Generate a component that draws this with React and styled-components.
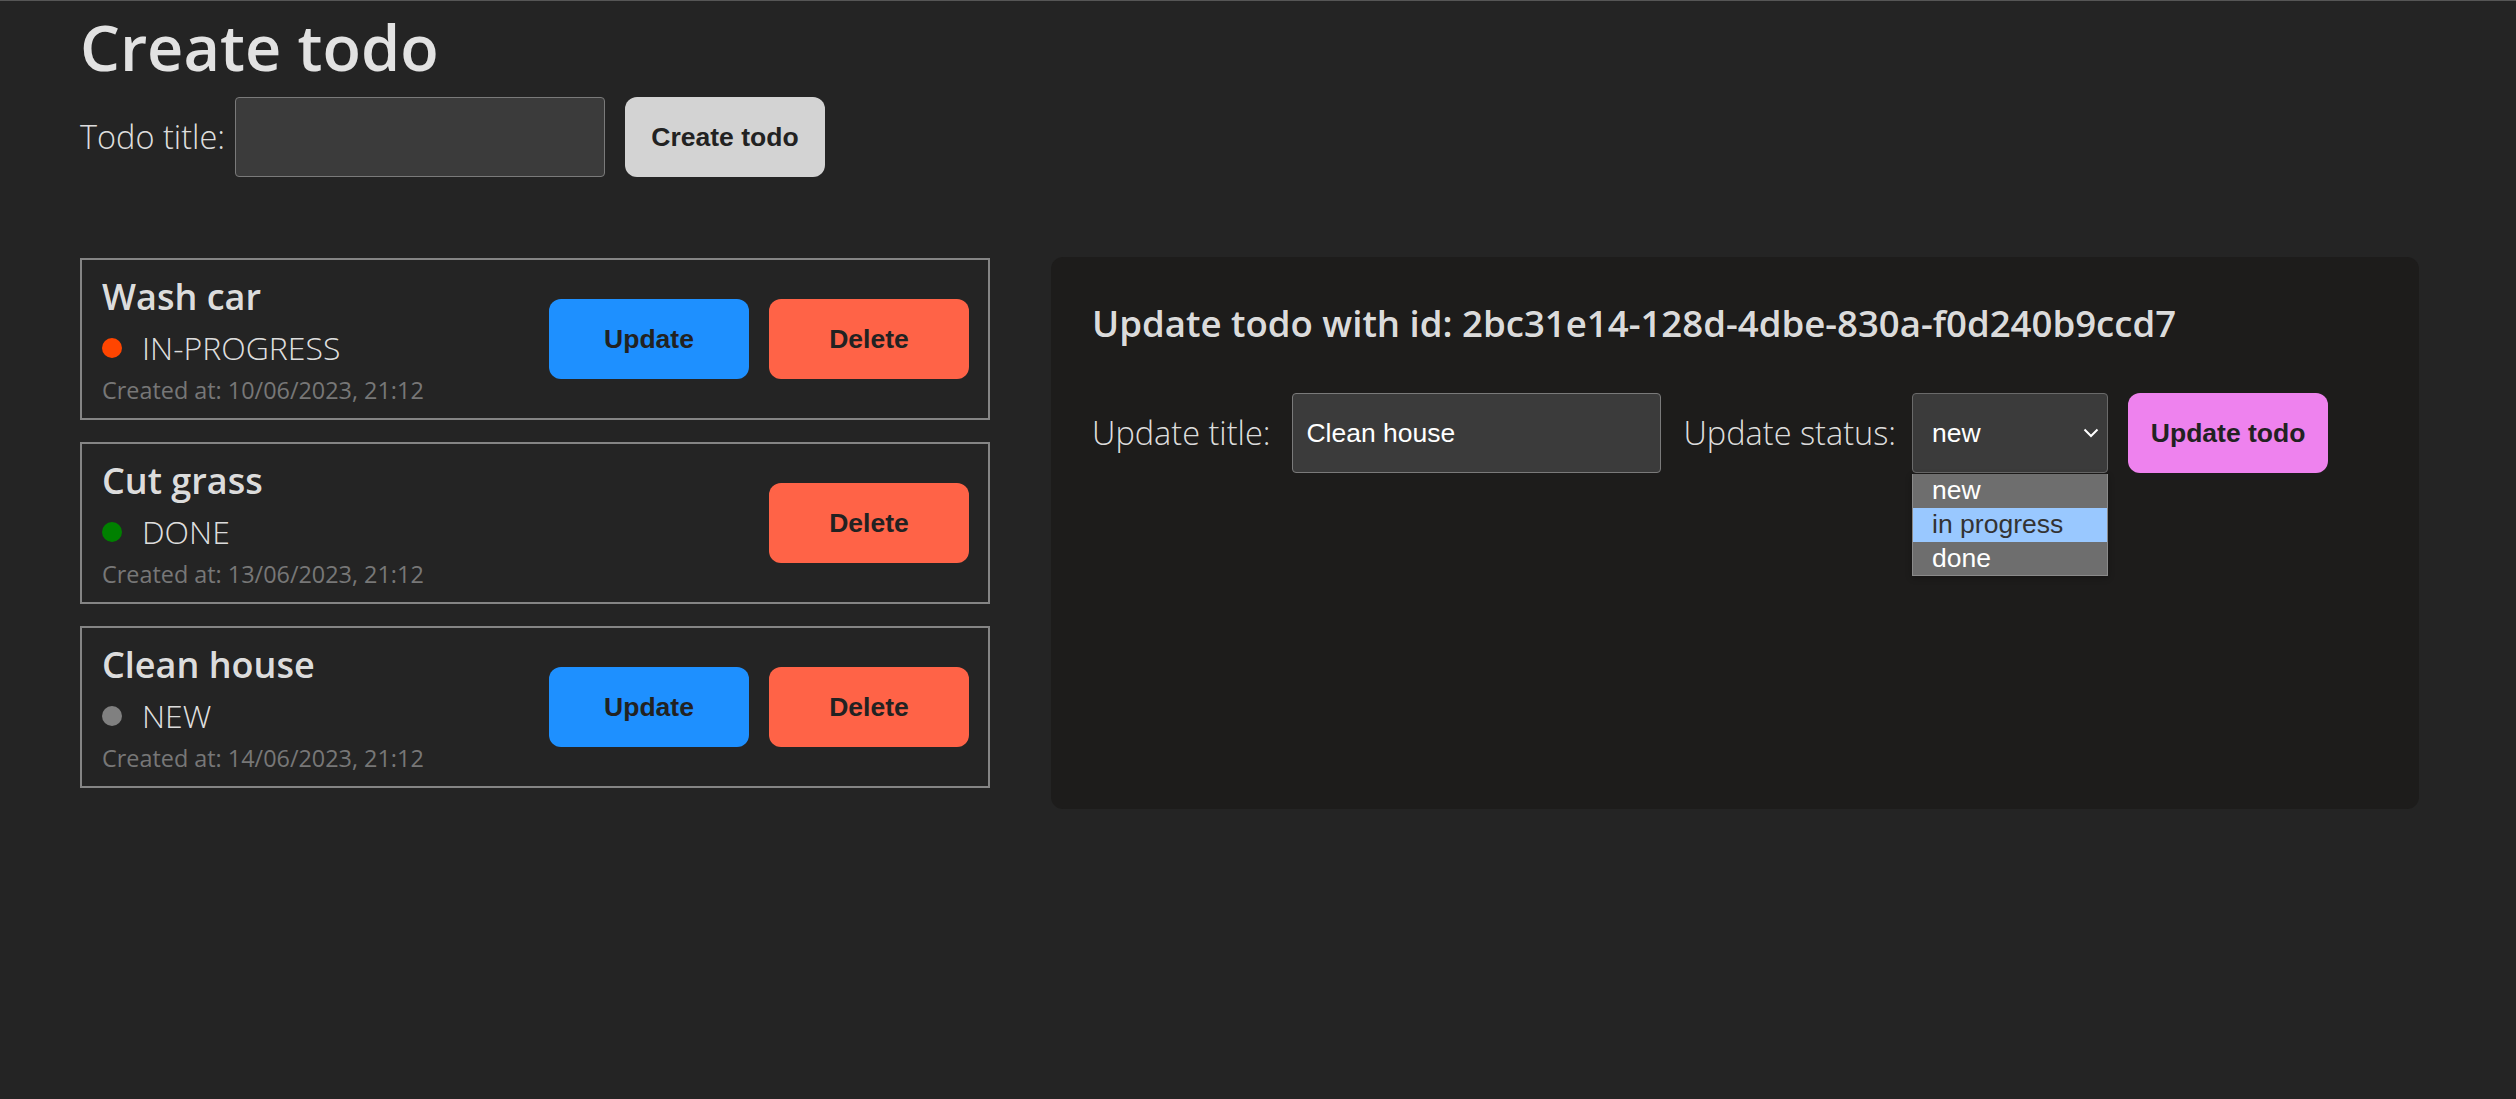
import React from "react";
import styled, { createGlobalStyle } from "styled-components";

const GlobalStyle = createGlobalStyle`
  html, body {
    margin: 0;
    padding: 0;
    background: #242424;
  }
  body {
    border-top: 1px solid #565656;
    min-height: 100vh;
    box-sizing: border-box;
    font-family: "Open Sans", "Noto Sans", sans-serif;
    color: rgba(255, 255, 255, 0.87);
  }
`;

const Page = styled.div`
  padding: 11px 80px 0 80px;
`;

const PageTitle = styled.h1`
  margin: 0;
  font-weight: 600;
  font-size: 63px;
  line-height: 70.4px;
  color: rgba(255, 255, 255, 0.87);
`;

const CreateRow = styled.div`
  display: flex;
  align-items: center;
  height: 80px;
  margin-top: 15px;
`;

const FieldLabel = styled.label`
  font-weight: 300;
  font-size: 32.5px;
  line-height: 40px;
  white-space: nowrap;
  margin-right: ${(p) => p.$gap}px;
`;

const TextInput = styled.input`
  box-sizing: border-box;
  width: ${(p) => p.$width}px;
  height: 80px;
  background: #3b3b3b;
  border: 1px solid #7a7a7a;
  border-radius: 4px;
  color: #fff;
  font-family: "Liberation Sans", Arial, sans-serif;
  font-size: 26.5px;
  padding: 0 13px;
  outline: none;
  margin-right: ${(p) => p.$gap}px;
`;

const Button = styled.button`
  box-sizing: border-box;
  width: 200px;
  height: 80px;
  border: none;
  border-radius: 12px;
  background: ${(p) => p.$bg};
  color: #222;
  font-family: "Liberation Sans", Arial, sans-serif;
  font-weight: 700;
  font-size: 26.5px;
  cursor: pointer;
  padding: 0;
`;

const Main = styled.div`
  display: flex;
  align-items: flex-start;
  gap: 61px;
  margin-top: 80px;
`;

const TodoList = styled.div`
  width: 910px;
  display: flex;
  flex-direction: column;
  gap: 22px;
  margin-top: 1px;
`;

const Card = styled.div`
  box-sizing: border-box;
  height: 162px;
  border: 2px solid #858585;
  display: flex;
  align-items: center;
  justify-content: space-between;
  padding: 0 19px 0 20px;
`;

const Info = styled.div`
  display: flex;
  flex-direction: column;
`;

const CardTitle = styled.div`
  font-weight: 600;
  font-size: 36px;
  line-height: 48px;
  margin-bottom: 7px;
  color: rgba(255, 255, 255, 0.87);
`;

const StatusRow = styled.div`
  display: flex;
  align-items: center;
  gap: 20px;
  height: 40px;
  margin-bottom: 6px;
  font-weight: 300;
  font-size: 32px;
`;

const Dot = styled.span`
  width: 20px;
  height: 20px;
  border-radius: 50%;
  background: ${(p) => p.$color};
  flex: none;
`;

const Created = styled.div`
  font-weight: 400;
  font-size: 23.4px;
  line-height: 32px;
  color: #777;
`;

const Actions = styled.div`
  display: flex;
  gap: 20px;
`;

const Panel = styled.section`
  box-sizing: border-box;
  width: 1368px;
  height: 552px;
  background: #1d1c1b;
  border-radius: 12px;
  padding: 42px 41px;
`;

const PanelHeading = styled.h2`
  margin: 0;
  font-weight: 600;
  font-size: 36.6px;
  line-height: 48px;
  color: rgba(255, 255, 255, 0.87);
`;

const UpdateRow = styled.div`
  display: flex;
  align-items: center;
  height: 80px;
  margin-top: 46px;
`;

const SelectWrap = styled.div`
  position: relative;
  width: 196px;
  height: 80px;
  margin-right: 20px;
`;

const Select = styled.select`
  appearance: none;
  box-sizing: border-box;
  width: 100%;
  height: 100%;
  background: #3b3b3b;
  border: 1px solid #6a6a6a;
  border-radius: 4px;
  color: #fff;
  font-family: "Liberation Sans", Arial, sans-serif;
  font-size: 26.5px;
  padding: 0 19px;
  outline: none;
`;

const Chevron = styled.svg`
  position: absolute;
  right: 9px;
  top: 35px;
  pointer-events: none;
`;

const OptionList = styled.ul`
  position: absolute;
  top: 100%;
  left: 0;
  right: 0;
  margin: 1px 0 0;
  padding: 0;
  list-style: none;
  background: #6e6e6e;
  border: 1px solid #8a8a8a;
  border-top: none;
  box-shadow: 0 2px 6px rgba(0, 0, 0, 0.3);
  font-family: "Liberation Sans", Arial, sans-serif;
  font-size: 26.5px;
`;

const OptionItem = styled.li`
  height: 33.6px;
  line-height: 33.6px;
  padding-left: 19px;
  color: ${(p) => (p.$active ? "#333" : "#fff")};
  background: ${(p) => (p.$active ? "#99c8ff" : "transparent")};
`;

const todos = [
  { title: "Wash car", status: "IN-PROGRESS", color: "#ff4500", date: "10/06/2023, 21:12", canUpdate: true },
  { title: "Cut grass", status: "DONE", color: "#008000", date: "13/06/2023, 21:12", canUpdate: false },
  { title: "Clean house", status: "NEW", color: "#808080", date: "14/06/2023, 21:12", canUpdate: true },
];

export default function App() {
  return (
    <>
      <GlobalStyle />
      <Page>
        <PageTitle>Create todo</PageTitle>
        <CreateRow>
          <FieldLabel $gap={10}>Todo title:</FieldLabel>
          <TextInput $width={370} $gap={20} />
          <Button $bg="#d3d3d3">Create todo</Button>
        </CreateRow>
        <Main>
          <TodoList>
            {todos.map((t) => (
              <Card key={t.title}>
                <Info>
                  <CardTitle>{t.title}</CardTitle>
                  <StatusRow>
                    <Dot $color={t.color} />
                    {t.status}
                  </StatusRow>
                  <Created>Created at: {t.date}</Created>
                </Info>
                <Actions>
                  {t.canUpdate && <Button $bg="#1e90ff">Update</Button>}
                  <Button $bg="#ff6347">Delete</Button>
                </Actions>
              </Card>
            ))}
          </TodoList>
          <Panel>
            <PanelHeading>Update todo with id: 2bc31e14-128d-4dbe-830a-f0d240b9ccd7</PanelHeading>
            <UpdateRow>
              <FieldLabel $gap={22}>Update title:</FieldLabel>
              <TextInput $width={369} $gap={22} defaultValue="Clean house" />
              <FieldLabel $gap={16}>Update status:</FieldLabel>
              <SelectWrap>
                <Select defaultValue="new">
                  <option value="new">new</option>
                  <option value="in progress">in progress</option>
                  <option value="done">done</option>
                </Select>
                <Chevron width="16" height="10" viewBox="0 0 16 10">
                  <polyline points="1.5,1.5 8,8 14.5,1.5" fill="none" stroke="#fff" strokeWidth="2" />
                </Chevron>
                <OptionList>
                  <OptionItem>new</OptionItem>
                  <OptionItem $active>in progress</OptionItem>
                  <OptionItem>done</OptionItem>
                </OptionList>
              </SelectWrap>
              <Button $bg="#ee82ee">Update todo</Button>
            </UpdateRow>
          </Panel>
        </Main>
      </Page>
    </>
  );
}
